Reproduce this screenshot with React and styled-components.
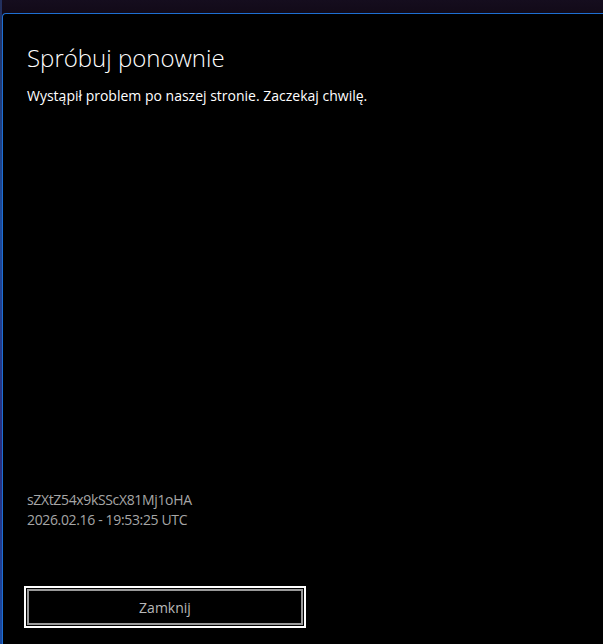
import React from 'react';
import styled, { createGlobalStyle } from 'styled-components';

const GlobalStyle = createGlobalStyle`
    html, body {
        margin: 0;
        padding: 0;
        height: 100%;
        overflow: hidden;
        background: #130b1a;
    }
    #root {
        height: 100%;
    }
`

const Backdrop = styled.div`
    height: 100%;
    box-sizing: border-box;
    padding: 13px 0 0 2px;
    background:
        linear-gradient(180deg, #23305e 0%, #1d4a9a 35%, #2a2c7a 70%, #1a4aa0 100%) left / 2px 100% no-repeat,
        linear-gradient(180deg, #150d1e 0px, #120a18 13px);
    font-family: "Open Sans", "Noto Sans", sans-serif;
`

const Dialog = styled.div`
    height: calc(100% + 20px);
    margin-right: -20px;
    box-sizing: border-box;
    background: #000;
    border-top: 1px solid #1e6fd2;
    border-left: 1px solid #1e6fd2;
    border-top-left-radius: 4px;
    display: flex;
    flex-direction: column;
    padding: 0 0 0 24px;
`

const Title = styled.h1`
    margin: 28px 0 0;
    font-size: 24px;
    line-height: 32px;
    font-weight: 300;
    color: #fff;
`

const Message = styled.p`
    margin: 12px 0 0;
    font-size: 14px;
    line-height: 20px;
    color: #fff;
`

const Spacer = styled.div`
    flex: 1;
`

const Meta = styled.div`
    font-size: 14px;
    line-height: 20px;
    letter-spacing: -0.35px;
    color: #a6a6a6;
`

const Footer = styled.div`
    margin: 59px 0 39px;
`

const Button = styled.button`
    display: block;
    width: 276px;
    height: 36px;
    box-sizing: border-box;
    background: #000;
    border: 2px solid #999;
    outline: 2px solid #fff;
    outline-offset: 1px;
    color: #b8b8b8;
    font-family: inherit;
    font-size: 14px;
    padding: 0;
`

export default function App() {
    return (
        <Backdrop>
            <GlobalStyle />
            <Dialog>
                <Title>Spróbuj ponownie</Title>
                <Message>Wystąpił problem po naszej stronie. Zaczekaj chwilę.</Message>
                <Spacer />
                <Meta>sZXtZ54x9kSScX81Mj1oHA</Meta>
                <Meta>2026.02.16 - 19:53:25 UTC</Meta>
                <Footer>
                    <Button>Zamknij</Button>
                </Footer>
            </Dialog>
        </Backdrop>
    );
}
